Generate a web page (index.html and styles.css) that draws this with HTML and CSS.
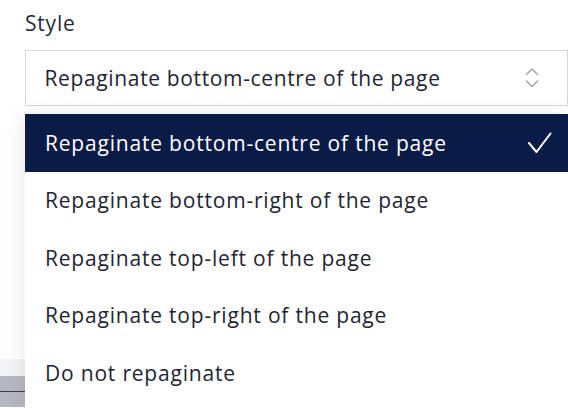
FILE: index.html
```html
<!DOCTYPE html>
<html lang="en">
<head>
<meta charset="utf-8">
<title>Style</title>
<link rel="stylesheet" href="styles.css">
</head>
<body>
<div class="page">
  <div class="field">
    <div class="label">Style</div>
    <div class="select">
      <span class="select-text">Repaginate bottom-centre of the page</span>
      <svg class="chevrons" width="14" height="22" viewBox="0 0 14 22" aria-hidden="true">
        <polyline points="1.5,7.5 7,2 12.5,7.5" />
        <polyline points="1.5,14 7,19.5 12.5,14" />
      </svg>
    </div>
  </div>
  <div class="under">
    <div class="under-light"></div>
    <div class="under-bar"><div class="under-line"></div></div>
  </div>

  <ul class="menu">
    <li class="option selected">
      <span>Repaginate bottom-centre of the page</span>
      <svg class="check" width="24" height="22" viewBox="0 0 24 22" aria-hidden="true">
        <polyline points="1,11 8.5,20 22.5,1.5" />
      </svg>
    </li>
    <li class="option"><span>Repaginate bottom-right of the page</span></li>
    <li class="option"><span>Repaginate top-left of the page</span></li>
    <li class="option"><span>Repaginate top-right of the page</span></li>
    <li class="option"><span>Do not repaginate</span></li>
  </ul>
</div>
</body>
</html>
```

FILE: styles.css
```css
* { box-sizing: border-box; }
html, body {
  margin: 0;
  padding: 0;
  background: #ffffff;
}
body {
  width: 568px;
  height: 408px;
  overflow: hidden;
  font-family: "Open Sans", "Lato", sans-serif;
  color: #1f2433;
}
.page {
  position: relative;
  width: 568px;
  height: 408px;
}
.field {
  padding: 9px 0 0 25px;
}
.label {
  font-size: 21px;
  line-height: 28px;
  letter-spacing: 0.8px;
  color: #262a38;
  margin-bottom: 13px;
}
.select {
  height: 56px;
  border: 1.5px solid #d6d7dd;
  display: flex;
  align-items: center;
  justify-content: space-between;
  padding: 0 28px 0 18.5px;
}
.select-text {
  font-size: 21px;
  letter-spacing: 0.64px;
  color: #1f2434;
}
.chevrons {
  fill: none;
  stroke: #a3a7b5;
  stroke-width: 1.6;
  stroke-linecap: round;
  stroke-linejoin: round;
}
.under {
  margin-top: 253px;
}
.under-light {
  width: 25px;
  height: 17px;
  background: #f4f4f6;
}
.under-bar {
  width: 25px;
  height: 31px;
  background: #b5b8c1;
  padding-top: 15px;
}
.under-line {
  height: 1px;
  background: #3c3f4a;
}
.menu {
  position: absolute;
  top: 114px;
  left: 25px;
  right: 0;
  bottom: 0;
  margin: 0;
  padding: 0;
  list-style: none;
  background: #ffffff;
  box-shadow: -4px 0 18px rgba(20, 25, 45, 0.08);
}
.option {
  height: 57.5px;
  display: flex;
  align-items: center;
  justify-content: space-between;
  padding: 0 16px 0 20px;
  font-size: 21px;
  letter-spacing: 0.8px;
  color: #1f2434;
}
.option.selected {
  background: #0b1b47;
  color: #ffffff;
}
.check {
  fill: none;
  stroke: #ffffff;
  stroke-width: 2;
  stroke-linecap: round;
  stroke-linejoin: round;
}
```
